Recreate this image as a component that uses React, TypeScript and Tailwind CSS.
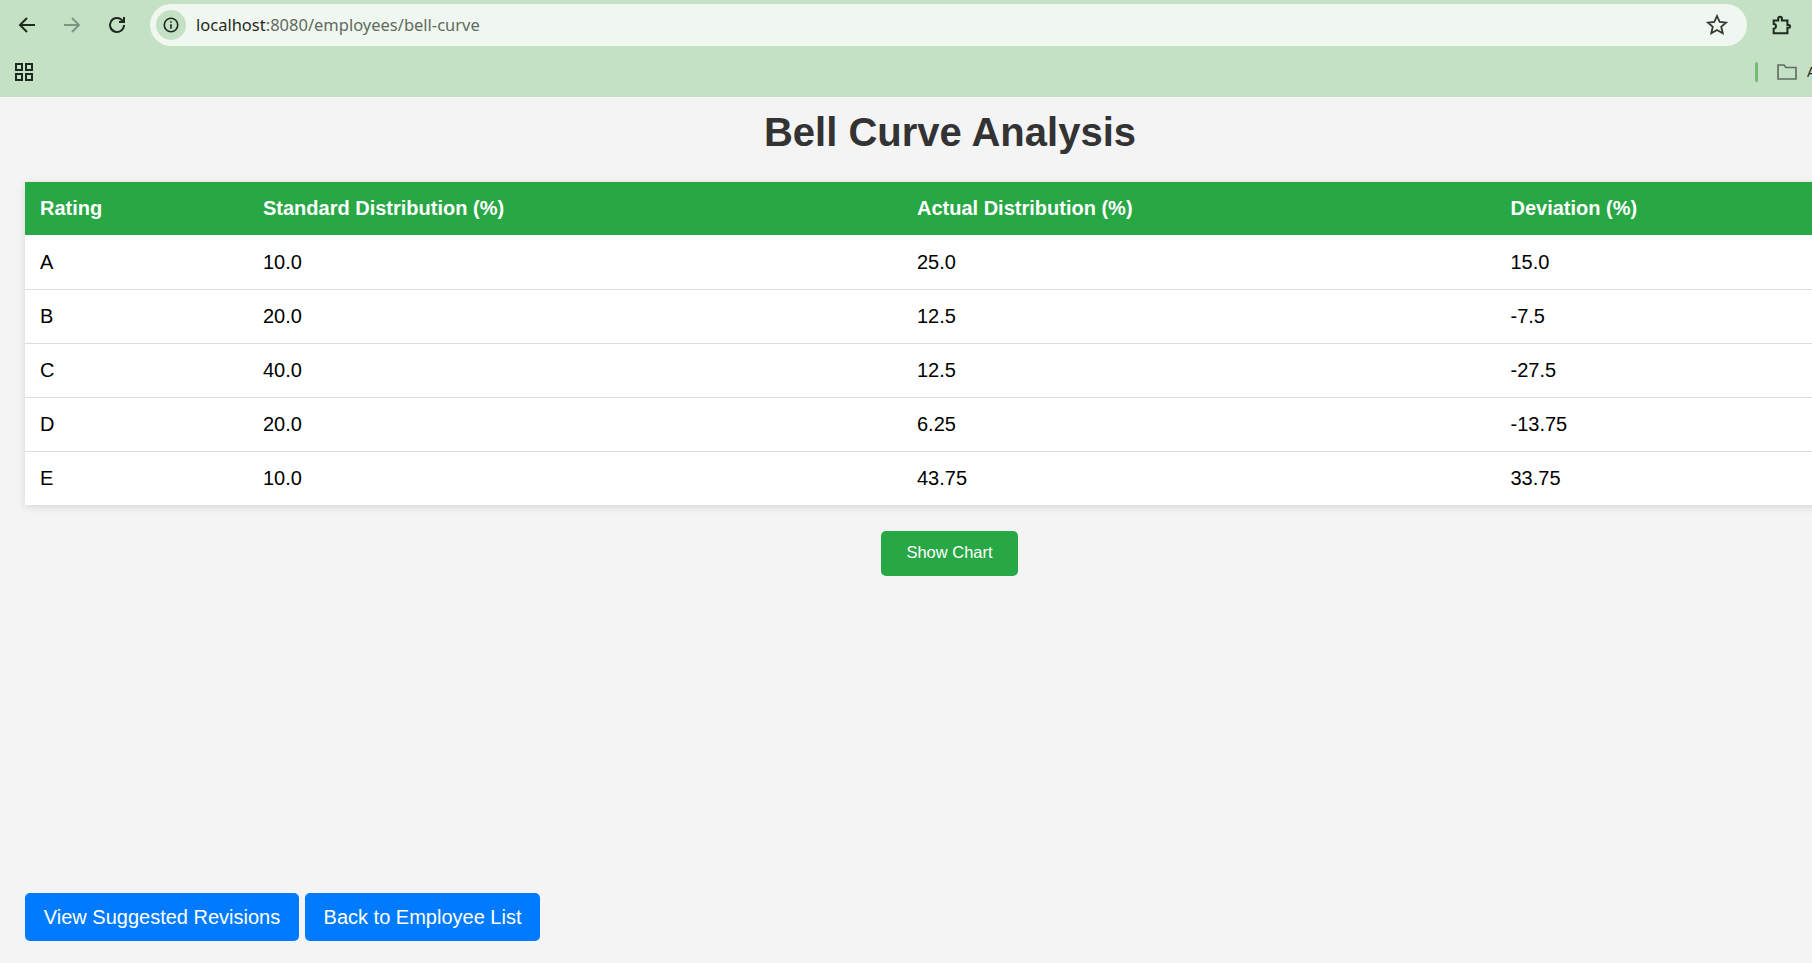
import React from "react";

const rows = [
  ["A", "10.0", "25.0", "15.0"],
  ["B", "20.0", "12.5", "-7.5"],
  ["C", "40.0", "12.5", "-27.5"],
  ["D", "20.0", "6.25", "-13.75"],
  ["E", "10.0", "43.75", "33.75"],
];

function Toolbar() {
  return (
    <div className="h-[97px] bg-[#c5e1c5] flex flex-col shrink-0">
      <div className="h-[52px] flex items-start pt-1 pl-[15px] shrink-0">
        <div className="flex items-center h-[42px] gap-[21px] w-[135px] shrink-0">
          <svg width="24" height="24" viewBox="0 0 24 24" fill="none" stroke="#1f2a1f" strokeWidth="2"><path d="M20 12H5M12 5l-7 7 7 7" /></svg>
          <svg width="24" height="24" viewBox="0 0 24 24" fill="none" stroke="#7d9680" strokeWidth="2"><path d="M4 12h15M12 5l7 7-7 7" /></svg>
          <svg width="24" height="24" viewBox="0 0 24 24" fill="none" stroke="#1f2a1f" strokeWidth="2"><path d="M19 12a7 7 0 1 1-2.2-5.1L19 9M19 4v5h-5" /></svg>
        </div>
        <div className="w-[1597px] h-[42px] rounded-full bg-[#f0f7f0] flex items-center pl-[6px] pr-[18px] shrink-0">
          <div className="w-[30px] h-[30px] rounded-full bg-[#c5e1c5] flex items-center justify-center shrink-0">
            <svg width="18" height="18" viewBox="0 0 24 24" fill="none" stroke="#1f2a1f" strokeWidth="2.2"><circle cx="12" cy="12" r="9" /><path d="M12 11v6M12 7v2" /></svg>
          </div>
          <div className="ml-[10px] text-[16.5px] text-[#5f6b60] font-['Noto_Sans',sans-serif]"><span className="text-[#1f2a1f]">localhost</span>:8080/employees/bell-curve</div>
          <div className="flex-1" />
          <svg width="24" height="24" viewBox="0 0 24 24" fill="none" stroke="#2f3a30" strokeWidth="1.8"><path d="M12 3l2.7 6 6.3.6-4.8 4.2 1.5 6.4L12 17l-5.7 3.2 1.5-6.4L3 9.6 9.3 9z" /></svg>
        </div>
        <div className="ml-[23px] h-[42px] flex items-center shrink-0">
          <svg width="22" height="22" viewBox="0 0 24 24" fill="none" stroke="#1f2a1f" strokeWidth="2.2"><path d="M4 7h5V5a2 2 0 0 1 4 0v2h6v5h1.5a1.5 1.5 0 0 1 0 3H19v6H4v-5a2.5 2.5 0 0 0 0-5z" /></svg>
        </div>
      </div>
      <div className="flex-1 flex items-center pl-[14px] pb-[6px]">
        <svg width="20" height="20" viewBox="0 0 20 20" fill="none" stroke="#1f2a1f" strokeWidth="2"><rect x="2" y="2" width="6" height="6" /><rect x="12" y="2" width="6" height="6" /><rect x="2" y="12" width="6" height="6" /><rect x="12" y="12" width="6" height="6" /></svg>
        <div className="flex-1" />
        <div className="w-[3px] h-[20px] rounded bg-[#74bb78] mr-[19px]" />
        <svg width="20" height="16" viewBox="0 0 20 16" fill="none" stroke="#5f6b60" strokeWidth="1.6"><path d="M1 15V1h6l2 2.5h10V15z" /></svg>
        <span className="ml-[10px] w-[5px] overflow-hidden text-[14px] text-[#1f2a1f] font-['Noto_Sans',sans-serif]">A</span>
      </div>
    </div>
  );
}

export default function App() {
  return (
    <div className="w-[1812px] h-[963px] overflow-hidden bg-[#f4f4f4] flex flex-col font-['Liberation_Sans',sans-serif]">
      <Toolbar />
      <div className="w-[1900px] h-[866px] flex flex-col px-[25px] shrink-0">
        <h1 className="text-[40px] leading-[46px] font-bold text-[#333333] text-center mt-[12px]">Bell Curve Analysis</h1>
        <table className="w-[1850px] mt-[27px] table-fixed border-collapse bg-white shadow-[0_2px_8px_rgba(0,0,0,0.12)] text-[20px] text-black">
          <colgroup>
            <col className="w-[223px]" />
            <col className="w-[654px]" />
            <col className="w-[593.5px]" />
            <col />
          </colgroup>
          <thead>
            <tr className="h-[53px] bg-[#28a745] text-white">
              {["Rating", "Standard Distribution (%)", "Actual Distribution (%)", "Deviation (%)"].map((h) => (
                <th key={h} className="px-[15px] pb-[2px] text-left font-bold">{h}</th>
              ))}
            </tr>
          </thead>
          <tbody>
            {rows.map((r) => (
              <tr key={r[0]} className="h-[54px] border-b border-[#dddddd] last:border-b-0">
                {r.map((c, i) => (
                  <td key={i} className="px-[15px]">{c}</td>
                ))}
              </tr>
            ))}
          </tbody>
        </table>
        <button className="self-center mt-[26px] mr-[1px] w-[137px] h-[45px] pb-[2px] rounded-[5px] bg-[#28a745] text-white text-[16.5px]">Show Chart</button>
        <div className="flex-1" />
        <div className="flex gap-[6px] mb-[22px]">
          <button className="w-[274px] h-[48px] rounded-[5px] bg-[#007bff] text-white text-[20px]">View Suggested Revisions</button>
          <button className="w-[235px] h-[48px] rounded-[5px] bg-[#007bff] text-white text-[20px]">Back to Employee List</button>
        </div>
      </div>
    </div>
  );
}
